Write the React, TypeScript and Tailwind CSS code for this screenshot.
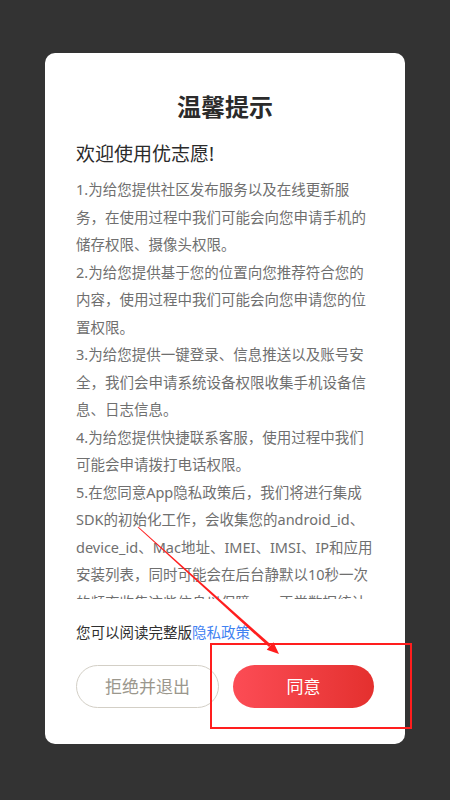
import React from 'react';

const bodyLines = [
  '1.为给您提供社区发布服务以及在线更新服',
  '务，在使用过程中我们可能会向您申请手机的',
  '储存权限、摄像头权限。',
  '2.为给您提供基于您的位置向您推荐符合您的',
  '内容，使用过程中我们可能会向您申请您的位',
  '置权限。',
  '3.为给您提供一键登录、信息推送以及账号安',
  '全，我们会申请系统设备权限收集手机设备信',
  '息、日志信息。',
  '4.为给您提供快捷联系客服，使用过程中我们',
  '可能会申请拨打电话权限。',
  '5.在您同意App隐私政策后，我们将进行集成',
  'SDK的初始化工作，会收集您的android_id、',
  'device_id、Mac地址、IMEI、IMSI、IP和应用',
  '安装列表，同时可能会在后台静默以10秒一次',
  '的频率收集这些信息以保障，一正常数据统计',
];

// red annotation arrow drawn over the screenshot
const Arrow: React.FC = () => {
  const start = [138, 527];
  const tip = [279, 654];
  const dx = tip[0] - start[0];
  const dy = tip[1] - start[1];
  const len = Math.hypot(dx, dy);
  const ux = dx / len;
  const uy = dy / len;
  const px = -uy;
  const py = ux;
  const base = [tip[0] - ux * 12, tip[1] - uy * 12];
  const shaft = [
    [start[0] + px * 0.5, start[1] + py * 0.5],
    [base[0] + px * 1.5, base[1] + py * 1.5],
    [base[0] - px * 1.5, base[1] - py * 1.5],
    [start[0] - px * 0.5, start[1] - py * 0.5],
  ];
  const head = [
    tip,
    [base[0] + px * 5, base[1] + py * 5],
    [base[0] - px * 5, base[1] - py * 5],
  ];
  const pts = (a: number[][]) => a.map((p) => p.join(',')).join(' ');
  return (
    <svg className="pointer-events-none absolute left-0 top-0" width="450" height="800">
      <polygon points={pts(shaft)} fill="#ff1e1e" />
      <polygon points={pts(head)} fill="#ff1e1e" />
    </svg>
  );
};

const App: React.FC = () => {
  return (
    <div
      className="relative h-[800px] w-[450px] overflow-hidden bg-[#333333] pt-[53px]"
      style={{ fontFamily: '"Noto Sans", "Noto Sans CJK SC", sans-serif' }}
    >
      <div className="ml-[45px] flex h-[691px] w-[360px] flex-col rounded-[10px] bg-white px-[31px] pt-[38px] pb-[35px]">
        <h1 className="text-center text-[24px] leading-[32px] font-semibold text-[#2b2b2b]">温馨提示</h1>
        <p className="mt-[17px] text-[19px] leading-[28px] text-[#2b2b2b]">欢迎使用优志愿!</p>

        <div className="mt-[8px] h-[423px] overflow-hidden text-[14.5px] leading-[27.5px] text-[#6f6f6f]">
          {bodyLines.map((line, i) => (
            <div key={i} className="whitespace-nowrap">
              {line}
            </div>
          ))}
        </div>

        <p className="mt-[22px] text-[14.5px] leading-[22px] text-[#2f2f2f]">
          您可以阅读完整版<span className="text-[#3f82f2]">隐私政策</span>
        </p>

        <div className="mt-[22px] flex gap-[14px]">
          <button className="flex h-[43px] flex-1 items-center justify-center rounded-full border border-[#d3cfc6] text-[17px] text-[#9b978d]">
            拒绝并退出
          </button>
          <button className="flex h-[43px] flex-1 items-center justify-center rounded-full bg-gradient-to-r from-[#fc4c55] to-[#e4302e] text-[17px] text-white">
            同意
          </button>
        </div>
      </div>

      {/* annotation box around the agree button */}
      <div className="pointer-events-none absolute left-[210px] top-[643px] h-[86px] w-[202px] border-2 border-[#ff1e1e]" />
      <Arrow />
    </div>
  );
};

export default App;
